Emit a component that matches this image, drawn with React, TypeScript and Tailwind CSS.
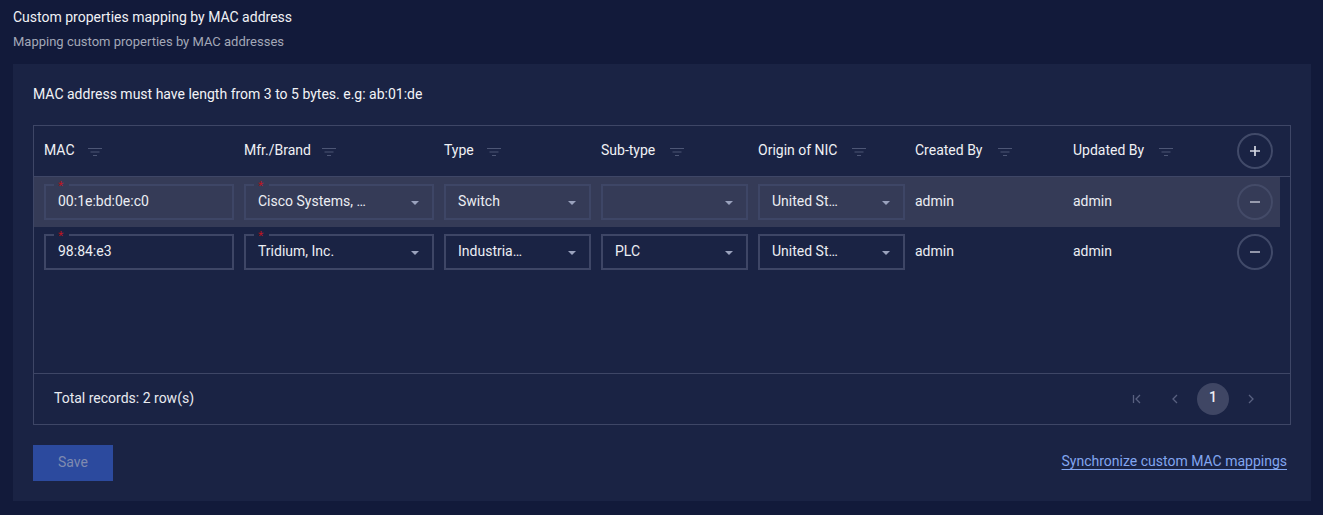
import * as React from "react";

const GRID = "grid grid-cols-[200px_200px_157px_157px_157px_158px_157px_1fr]";

const COLUMNS = [
  { label: "MAC", gap: "ml-[13px]" },
  { label: "Mfr./Brand", gap: "ml-[11px]" },
  { label: "Type", gap: "ml-[13px]" },
  { label: "Sub-type", gap: "ml-[15px]" },
  { label: "Origin of NIC", gap: "ml-[15px]" },
  { label: "Created By", gap: "ml-[16px]" },
  { label: "Updated By", gap: "ml-[15px]" },
];

const ROWS = [
  { mac: "00:1e:bd:0e:c0", brand: "Cisco Systems, …", type: "Switch", sub: "", origin: "United St…", active: true },
  { mac: "98:84:e3", brand: "Tridium, Inc.", type: "Industria…", sub: "PLC", origin: "United St…", active: false },
];

function FilterIcon({ gap }: { gap: string }) {
  return (
    <svg width="14" height="8" viewBox="0 0 14 8" className={`${gap} mt-px text-[#4d5675]`} fill="none" stroke="currentColor">
      <path d="M0 .5h14M2.5 4h9M5 7.5h4" />
    </svg>
  );
}

function Required({ bg }: { bg: string }) {
  return (
    <span className={`absolute -top-[5px] left-2 h-2 w-[15px] pl-1 text-left font-['Liberation_Sans'] text-[14px] leading-[10px] text-[#c0141c] ${bg}`}>
      *
    </span>
  );
}

function Field({ value, bg }: { value: string; bg: string }) {
  return (
    <div className="relative flex h-9 w-[190px] items-center border-2 border-[#3e4666] pl-3 pr-3">
      <Required bg={bg} />
      <span className="mb-0.5 text-[14px] text-[#eceef3]">{value}</span>
    </div>
  );
}

function Select({ value, required, wide, bg }: { value: string; required?: boolean; wide?: boolean; bg: string }) {
  return (
    <div className={`relative flex h-9 items-center justify-between border-2 border-[#3e4666] pl-3 pr-[13px] ${wide ? "w-[190px]" : "w-[147px]"}`}>
      {required && <Required bg={bg} />}
      <span className="mb-0.5 text-[14px] text-[#eceef3]">{value}</span>
      <span className="mt-px h-0 w-0 border-x-[4px] border-t-[4px] border-x-transparent border-t-[#9aa2bd]" />
    </div>
  );
}

function RoundButton({ children, dim }: { children: React.ReactNode; dim?: boolean }) {
  return (
    <button type="button" className={`flex h-9 w-9 items-center justify-center rounded-full border-2 ${dim ? "border-[#444b68]" : "border-[#414a69]"}`}>
      {children}
    </button>
  );
}

function PagerIcon({ d }: { d: string }) {
  return (
    <span className="flex h-8 w-8 items-center justify-center">
      <svg width="10" height="10" viewBox="0 0 10 10" fill="none" stroke="currentColor" strokeWidth="1.3">
        <path d={d} />
      </svg>
    </span>
  );
}

export default function App() {
  return (
    <div className="h-[515px] overflow-hidden bg-[#121a3a] pl-[13px] pr-3 font-['Roboto',sans-serif]">
      <div className="pt-2 text-[14px] leading-[18px] text-[#f0f1f5]">Custom properties mapping by MAC address</div>
      <div className="mt-[7px] text-[13px] leading-[18px] text-[#a3a8b7]">Mapping custom properties by MAC addresses</div>

      <div className="mt-[13px] h-[437px] bg-[#1a2344] px-5 pt-5">
        <div className="text-[14px] leading-[20px] text-[#f2f3f7]">MAC address must have length from 3 to 5 bytes. e.g: ab:01:de</div>

        <div className="mt-[21px] h-[300px] w-[1258px] border border-[#3e4666]">
          <div className={`${GRID} h-[51px] items-center border-b border-[#3e4666] pl-[10px]`}>
            {COLUMNS.map((c) => (
              <div key={c.label} className="flex items-center text-[14px] text-[#f0f1f5]">
                <span className="mb-0.5">{c.label}</span>
                <FilterIcon gap={c.gap} />
              </div>
            ))}
            <div className="ml-[7px]">
              <RoundButton>
                <svg width="10" height="10" viewBox="0 0 10 10" className="text-[#d5d8e2]" stroke="currentColor" strokeWidth="1.7">
                  <path d="M0 5h10M5 0v10" />
                </svg>
              </RoundButton>
            </div>
          </div>

          <div className="h-[196px]">
            {ROWS.map((r) => {
              const bg = r.active ? "bg-[#353b57]" : "bg-[#1a2344]";
              return (
                <div key={r.mac} className={`${GRID} h-[50px] w-[1246px] items-center pl-[10px] ${r.active ? "bg-[#353b57]" : ""}`}>
                  <div><Field value={r.mac} bg={bg} /></div>
                  <div><Select value={r.brand} required wide bg={bg} /></div>
                  <div><Select value={r.type} bg={bg} /></div>
                  <div><Select value={r.sub} bg={bg} /></div>
                  <div><Select value={r.origin} bg={bg} /></div>
                  <div className="mb-0.5 text-[14px] text-[#eceef3]">admin</div>
                  <div className="mb-0.5 text-[14px] text-[#eceef3]">admin</div>
                  <div className="ml-[7px]">
                    <RoundButton dim={r.active}>
                      <svg width="10" height="10" viewBox="0 0 10 10" className="text-[#a9adbd]" stroke="currentColor" strokeWidth="1.7">
                        <path d="M0 5h10" />
                      </svg>
                    </RoundButton>
                  </div>
                </div>
              );
            })}
          </div>

          <div className="flex h-[51px] items-center justify-between border-t border-[#3e4666] pl-5 pr-[23px]">
            <span className="mb-0.5 text-[14px] text-[#e8eaf0]">Total records: 2 row(s)</span>
            <div className="flex items-center gap-[6px] text-[#596180]">
              <PagerIcon d="M1.5 1v8M8 1 4 5l4 4" />
              <PagerIcon d="M7 1 3 5l4 4" />
              <span className="flex h-8 w-8 items-center justify-center rounded-full bg-[#3f4664] pb-[3px] text-[14px] font-medium text-[#eceef3]">1</span>
              <PagerIcon d="M3 1l4 4-4 4" />
            </div>
          </div>
        </div>

        <div className="mt-5 flex items-start justify-between pr-1">
          <button type="button" className="h-9 w-20 bg-[#2c4a9e] pb-0.5 text-[14px] text-[#7f8ab0]">Save</button>
          <a className="mt-[6px] text-[14px] text-[#82a6f0] underline underline-offset-[3px]">Synchronize custom MAC mappings</a>
        </div>
      </div>
    </div>
  );
}
